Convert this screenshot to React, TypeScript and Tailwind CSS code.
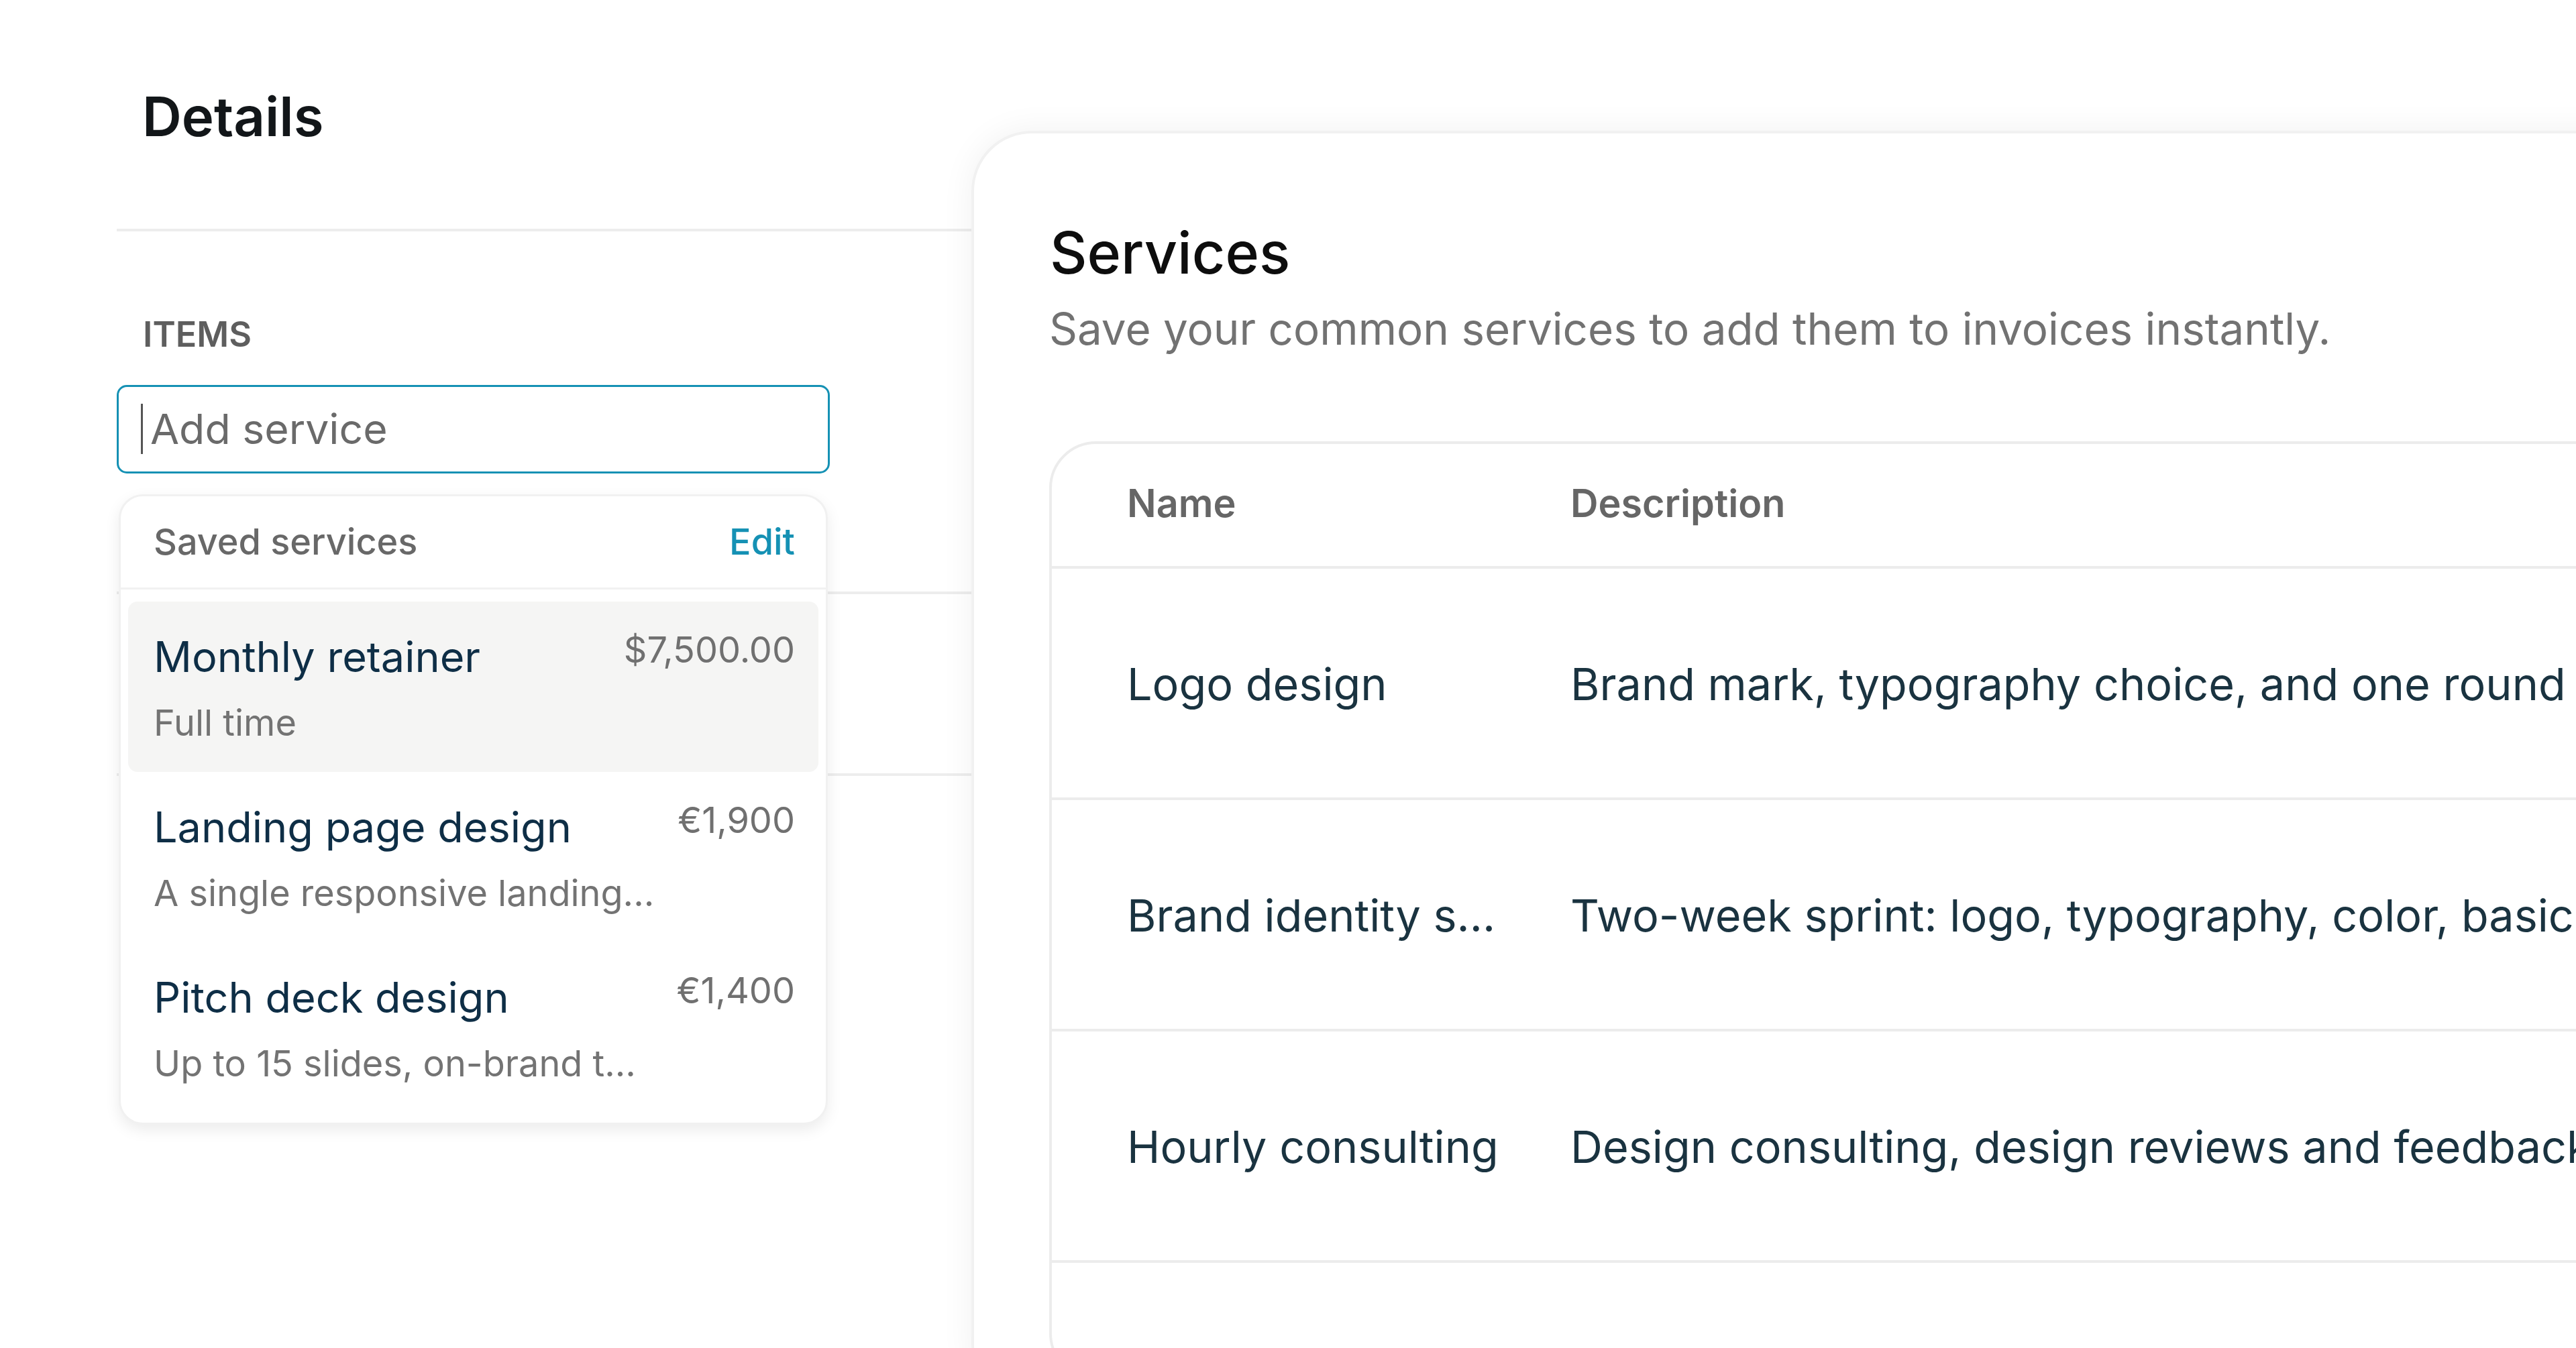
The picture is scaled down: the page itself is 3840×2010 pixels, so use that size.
import React from 'react';

type SavedService = {
  name: string;
  price: string;
  note: string;
  active?: boolean;
};

type ServiceRow = {
  name: string;
  description: string;
};

const savedServices: SavedService[] = [
  { name: 'Monthly retainer', price: '$7,500.00', note: 'Full time', active: true },
  { name: 'Landing page design', price: '€1,900', note: 'A single responsive landing...' },
  { name: 'Pitch deck design', price: '€1,400', note: 'Up to 15 slides, on-brand t...' },
];

const rows: ServiceRow[] = [
  { name: 'Logo design', description: 'Brand mark, typography choice, and one round of revisions.' },
  { name: 'Brand identity s...', description: 'Two-week sprint: logo, typography, color, basic guidelines.' },
  { name: 'Hourly consulting', description: 'Design consulting, design reviews and feedback.' },
];

// dropdown opened under the "Add service" field
const SavedServicesMenu = () => (
  <div className="absolute left-[3px] top-[163px] w-[1057px] rounded-[36px] border-[3px] border-[#f1f1f1] bg-white shadow-[0_8px_22px_rgba(0,0,0,0.08)] z-10">
    <div className="flex h-[136px] items-center justify-between pl-[49px] pr-[46px]">
      <span className="text-[54px] leading-none font-medium text-[#686868]">Saved services</span>
      <span className="text-[54px] leading-none font-medium text-[#1591b4]">Edit</span>
    </div>
    <div className="h-[3px] bg-[#f1f1f1]" />
    <div className="flex flex-col px-[11px] pt-[18px] pb-[15px]">
      {savedServices.map((s) => (
        <div
          key={s.name}
          className={`flex h-[254px] items-start justify-between rounded-[14px] pl-[38px] pr-[35px] pt-[44px] ${
            s.active ? 'bg-[#f5f5f4]' : ''
          }`}
        >
          <div className="flex flex-col">
            <span className="mt-[7px] text-[63px] leading-none text-[#0e2e46]">{s.name}</span>
            <span className="mt-[40px] text-[54px] leading-none text-[#737373]">{s.note}</span>
          </div>
          <span className="mt-[1px] text-[54px] leading-none text-[#707070]">{s.price}</span>
        </div>
      ))}
    </div>
  </div>
);

const DetailsPanel = () => (
  <div className="flex w-[1274px] shrink-0 flex-col">
    <h1 className="mt-[133px] pl-[38px] text-[81.5px] leading-none font-semibold text-[#121619]">Details</h1>
    <div className="mt-[126px] h-[4px] bg-[#ededed]" />
    <div className="mt-[128px] pl-[39px] text-[52px] leading-none font-semibold text-[#5e5e5e]">ITEMS</div>
    <div className="relative mt-[49px] w-[1063px]">
      <div className="flex h-[132px] items-center rounded-[15px] border-[3px] border-[#1591b4] bg-white pl-[33px]">
        <span className="h-[75px] w-[3px] bg-[#555]" />
        <span className="ml-[11px] text-[62.5px] leading-none text-[#6a6a6a]">Add service</span>
      </div>
      <SavedServicesMenu />
    </div>
    <div className="mt-[176px] h-[4px] bg-[#ededed]" />
    <div className="mt-[267px] h-[4px] bg-[#ededed]" />
  </div>
);

const ServicesCard = () => (
  <div className="mt-[195px] h-[1900px] w-[2600px] shrink-0 rounded-[90px] border-4 border-[#f1f1f1] bg-white pl-[112px] shadow-[0_0_50px_rgba(0,0,0,0.06)]">
    <h2 className="mt-[135px] pl-[1px] text-[86px] leading-none font-medium text-[#0d0d0d]">Services</h2>
    <p className="mt-[38px] text-[65.5px] leading-none text-[#727272]">
      Save your common services to add them to invoices instantly.
    </p>
    <div className="mt-[134px] h-[1400px] w-[2500px] rounded-[70px] border-4 border-[#ececec] bg-white">
      <div className="flex h-[186px] items-center border-b-4 border-[#ececec] pb-[4px] pl-[112px]">
        <span className="w-[661px] shrink-0 text-[57.5px] leading-none font-semibold text-[#666]">Name</span>
        <span className="text-[57.5px] leading-none font-semibold text-[#666]">Description</span>
      </div>
      {rows.map((r) => (
        <div
          key={r.name}
          className="flex h-[345px] items-center whitespace-nowrap border-b-4 border-[#ececec] pt-[5px] pl-[112px]"
        >
          <span className="w-[661px] shrink-0 text-[66.5px] leading-none text-[#1a3340]">{r.name}</span>
          <span className="text-[66.5px] leading-none text-[#1a3340]">{r.description}</span>
        </div>
      ))}
    </div>
  </div>
);

export default function App() {
  return (
    <div
      className="flex h-[2010px] w-[3840px] overflow-hidden bg-white pl-[174px]"
      style={{ fontFamily: 'Inter, "Noto Sans", sans-serif' }}
    >
      <DetailsPanel />
      <ServicesCard />
    </div>
  );
}
